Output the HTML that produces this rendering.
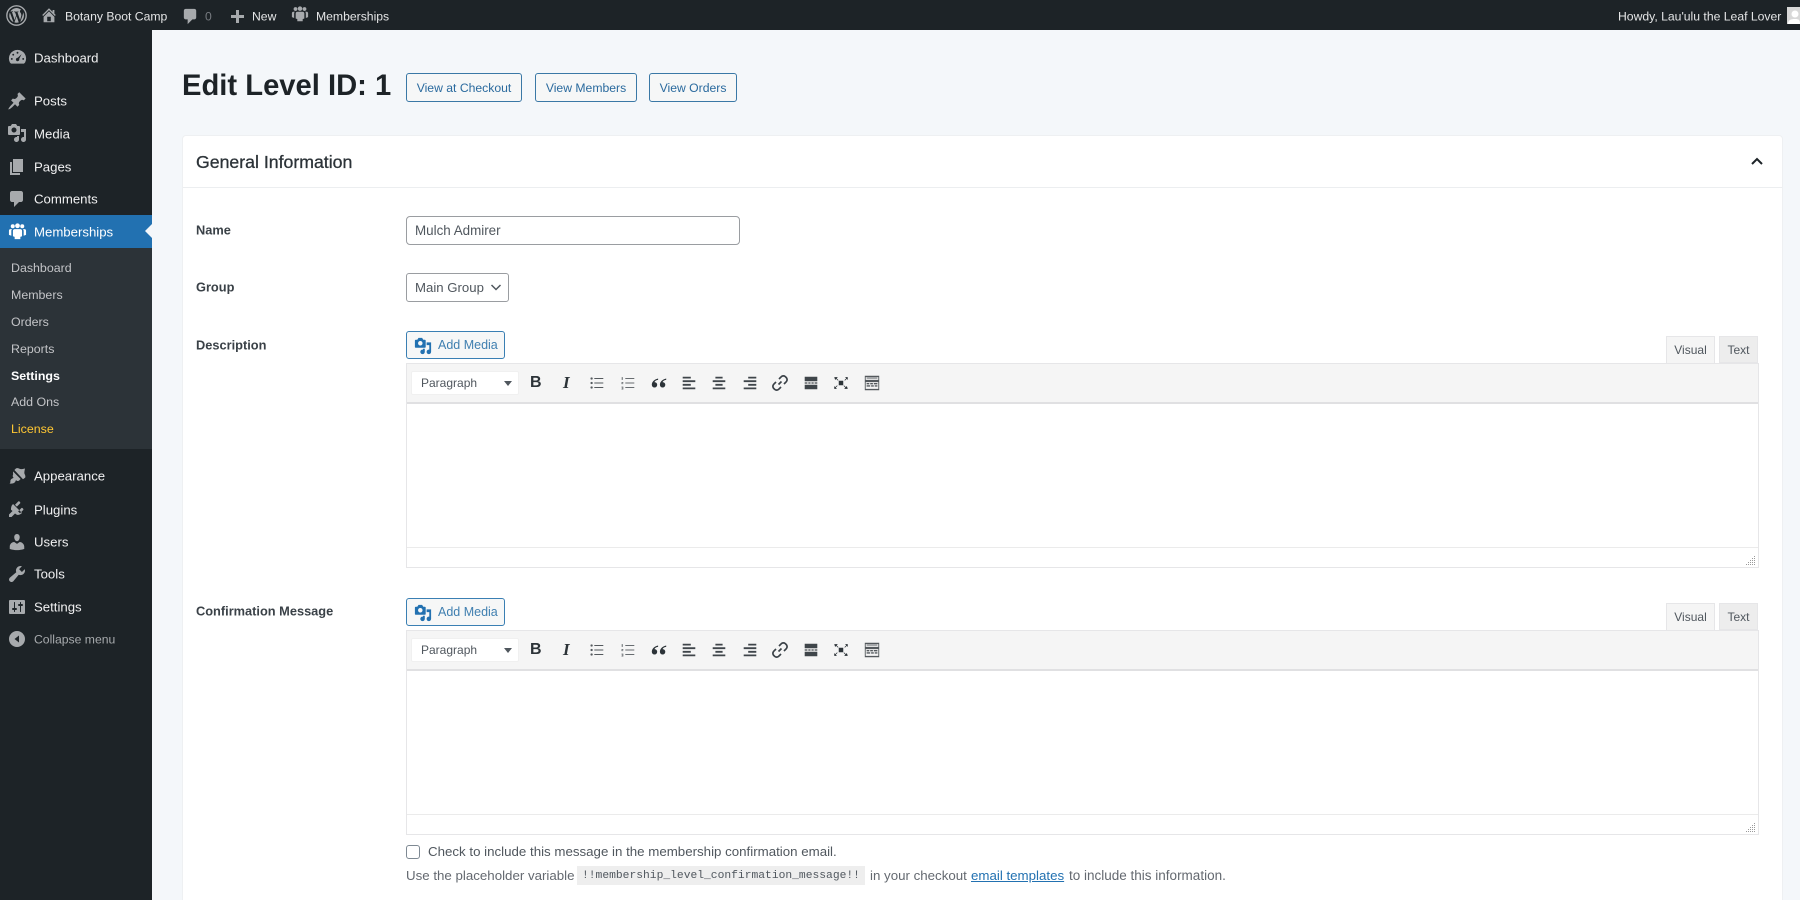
<!DOCTYPE html>
<html lang="en"><head><meta charset="utf-8"><title>Edit Level</title>
<style>
*{box-sizing:border-box}
html,body{margin:0;padding:0;width:1800px;height:900px;overflow:hidden;background:#f4f7fa;font-family:"Liberation Sans",sans-serif;color:#2c3338}
#w{position:absolute;left:0;top:0;width:1800px;height:900px;overflow:hidden;background:#f4f7fa;filter:blur(.35px)}
.a{position:absolute;white-space:nowrap}
.t{position:absolute;white-space:nowrap;line-height:20px;height:20px;transform:translateY(-9px)}
svg{position:absolute;display:block}
.m{left:34px;font-size:13.2px;color:#f0f0f1;transform:translateY(-9.5px)}
.s{left:11px;font-size:12.4px;color:#c3c4c7;transform:translateY(-10px)}
.ab{font-size:12.2px;color:#e4e5e6;transform:translateY(-9.5px)}
.l{left:196px;font-size:12.8px;font-weight:bold;color:#3a4147;transform:translateY(-9.5px)}
.btn{position:absolute;top:73px;height:29px;border:1px solid #3a78a6;border-radius:3px;background:#f6f7f7;color:#2a6a9e;font-size:12.2px;line-height:28px;text-align:center}
.am{position:absolute;left:406px;width:99px;height:28px;border:1px solid #3a7fb3;border-radius:3px;background:#f6f7f7;color:#3f7fb0;font-size:12.5px;line-height:27px;padding-left:31px}
.ed{position:absolute;left:406px;width:1353px;border:1px solid #e6e6e8;background:#fff}
.tb{position:absolute;left:0;right:0;top:0;height:40px;background:#f5f5f5;border-bottom:2px solid #e0e0e2}
.ps{position:absolute;left:411px;width:108px;height:24px;background:#fff;border:1px solid #f0f0f0;border-radius:2px;color:#50575e;font-size:12px;line-height:23px;padding-left:9px}
.ps i{position:absolute;right:6px;top:9px;border-left:4px solid transparent;border-right:4px solid transparent;border-top:5px solid #50575e}
.tv,.tx{position:absolute;height:27px;font-size:12px;text-align:center;line-height:27px;color:#50575e;border:1px solid #e6e6e8}
.tv{left:1666px;width:49px;background:#f5f5f5;border-bottom:0;height:28px}
.tx{left:1719px;width:39px;background:#ededed}
.ic{fill:#a7aaad}
.tbi{fill:#2c3338}
.h{font-size:13.3px;color:#646970}
</style></head><body>
<svg width="0" height="0" style="position:absolute">
<defs>
<symbol id="media" viewBox="0 0 20 20"><path d="M13 11V4c0-.55-.45-1-1-1h-1.670L9 1H5L3.670 3H2c-.55 0-1 .45-1 1v7c0 .55.45 1 1 1h10c.55 0 1-.45 1-1zM7 4.500c1.380 0 2.500 1.120 2.500 2.500S8.380 9.500 7 9.500 4.500 8.380 4.500 7 5.620 4.500 7 4.500zM14 6h5v10.500c0 1.380-1.120 2.500-2.500 2.500S14 17.880 14 16.500s1.120-2.500 2.500-2.500c.17 0 .34.020.5.050V9h-3V6zm-4 8.050V13h2v3.500c0 1.380-1.120 2.500-2.500 2.500S7 17.880 7 16.500 8.120 14 9.500 14c.17 0 .34.020.5.050z"/></symbol>
<symbol id="people" viewBox="0 0 20 20"><circle cx="5" cy="4.500" r="2.100"/><circle cx="15" cy="4.500" r="2.100"/><circle cx="10" cy="4" r="2.500"/><path d="M2.500 7.500c-1 0-1.500.8-1.500 1.700v4.300l2.500 1V9.500c0-.8.3-1.500.8-2zM17.500 7.500c1 0 1.500.8 1.500 1.700v4.300l-2.500 1V9.500c0-.8-.3-1.500-.8-2z"/><path d="M7 7.500h6c1 0 1.800.8 1.800 1.800V15l-1.800.700V18H7v-2.300L5.200 15V9.300C5.200 8.300 6 7.500 7 7.500z"/></symbol>
<symbol id="ul" viewBox="0 0 20 20"><circle cx="4" cy="5" r="1.300"/><circle cx="4" cy="10" r="1.300"/><circle cx="4" cy="15" r="1.300"/><path d="M7 4.500h10v1H7zM7 9.500h10v1H7zM7 14.500h10v1H7z"/></symbol>
<symbol id="ol" viewBox="0 0 20 20"><path d="M3 3.500h1.200v3H3zM2.800 9h2v1h-1v.500h1v.800h-2zM2.800 14h2v3.200h-2v-.700h1.200v-.400h-1v-.700h1v-.400H2.800zM7 4.500h10v1H7zM7 9.500h10v1H7zM7 14.500h10v1H7z"/></symbol>
<symbol id="al" viewBox="0 0 20 20"><path d="M3 3h9v2H3zM3 7h14v2H3zM3 11h9v2H3zM3 15h14v2H3z"/></symbol>
<symbol id="ac" viewBox="0 0 20 20"><path d="M6 3h8v2H6zM3 7h14v2H3zM6 11h8v2H6zM3 15h14v2H3z"/></symbol>
<symbol id="ar" viewBox="0 0 20 20"><path d="M8 3h9v2H8zM3 7h14v2H3zM8 11h9v2H8zM3 15h14v2H3z"/></symbol>
<symbol id="link" viewBox="0 0 20 20"><path d="M8.500 11.500l3-3M9 6l2.200-2.200a3 3 0 0 1 4.300 0l.7.700a3 3 0 0 1 0 4.300L14 11M11 14l-2.200 2.200a3 3 0 0 1-4.300 0l-.7-.7a3 3 0 0 1 0-4.300L6 9" fill="none" stroke="#3a4147" stroke-width="1.700"/></symbol>
<symbol id="more" viewBox="0 0 20 20"><path d="M3 3h14v5H3zM3 12h14v5H3zM3 9.300h3v1.400H3zM7 9.300h2.500v1.400H7zM10.500 9.300H13v1.400h-2.500zM14 9.300h3v1.400h-3z"/></symbol>
<symbol id="fs" viewBox="0 0 20 20"><path d="M7.500 7.500h5v5h-5zM2.500 3.500h4l-1.300 1.300 2 2-.6.600-2-2L3.500 6.700zM17.500 3.500v3.200l-1.100-1.300-2 2-.6-.6 2-2-1.300-1.300zM2.500 16.500v-3.200l1.100 1.300 2-2 .6.6-2 2 1.300 1.300zM17.500 16.500h-4l1.300-1.300-2-2 .6-.6 2 2 1.100-1.300z"/></symbol>
<symbol id="kit" viewBox="0 0 20 20"><path d="M2 2h16v16H2zM3 3.500v3h14v-3zM3 9v7.500h14V9z" fill-rule="evenodd"/><path d="M4 4h12v1H4zM4 10h3v1.500H4zM8 10h3v1.500H8zM12 10h4v1.500h-4zM4 12.500h4V14H4zM9 12.500h3V14H9zM13 12.500h3V14h-3z"/></symbol>
<symbol id="qt" viewBox="0 0 20 20"><path d="M9 5C5 6 2 8.500 2 12a3 3 0 1 0 3-3c.3-1.300 2-2.200 4-2.500zM18 5c-4 1-7 3.500-7 7a3 3 0 1 0 3-3c.3-1.300 2-2.200 4-2.500z"/></symbol>
<symbol id="cmt" viewBox="0 0 20 20"><path d="M5 2h9c1.100 0 2 .9 2 2v7c0 1.100-.9 2-2 2h-2l-5 5v-5H5c-1.100 0-2-.9-2-2V4c0-1.100.9-2 2-2z"/></symbol>
<symbol id="rz" viewBox="0 0 10 10"><path d="M8 1h1v1H8zM6 3h1v1H6zM8 3h1v1H8zM4 5h1v1H4zM6 5h1v1H6zM8 5h1v1H8zM2 7h1v1H2zM4 7h1v1H4zM6 7h1v1H6zM8 7h1v1H8zM0 9h1v1H0zM2 9h1v1H2zM4 9h1v1H4zM6 9h1v1H6zM8 9h1v1H8z"/></symbol>
</defs></svg>
<div id="w">
<!-- admin bar -->
<div class="a" style="left:0;top:0;width:1800px;height:30px;background:#1d2327"></div>
<svg style="left:6px;top:5px" width="21" height="21" viewBox="0 0 20 20"><circle cx="10" cy="10" r="9.200" fill="none" stroke="#a7aaad" stroke-width="1.300"/><path fill="#a7aaad" d="M3.100 10c0 2.800 1.600 5.200 4 6.300L3.700 7.100a7 7 0 0 0-.6 2.900zm11.500-.4c0-.9-.3-1.500-.6-2-.4-.6-.7-1.100-.7-1.700 0-.7.500-1.300 1.200-1.300h.1A6.900 6.900 0 0 0 4.200 6.200h.4c.7 0 1.900-.1 1.900-.1.400 0 .4.500 0 .6l-.8.100 2.500 7.500 1.500-4.500-1.100-2.900-.7-.1c-.4 0-.3-.6 0-.6 0 0 1.200.1 1.900.1s1.900-.1 1.900-.1c.4 0 .4.500 0 .6l-.8.100 2.500 7.400.7-2.300c.3-1 .5-1.700.5-2.300zM10.100 10.600l-2.100 6a6.900 6.900 0 0 0 4.200-.1l-.1-.1zm6-3.900c0 .2.100.5.100.8 0 .7-.1 1.500-.5 2.600l-2.100 6.100a6.900 6.900 0 0 0 2.500-9.500z"/></svg>
<svg class="ic" style="left:40px;top:6px" width="18" height="18" viewBox="0 0 20 20"><path d="M16 8.500l1.530 1.530-1.060 1.060L10 4.620l-6.470 6.470-1.060-1.060L10 2.500l4 4v-2h2v4zm-6-2.460l6 5.990V18H4v-5.970zM12 17v-5H8v5h4z"/></svg>
<span class="t ab" style="left:65px;top:15.500px">Botany Boot Camp</span>
<svg class="ic" style="left:181px;top:7px" width="19" height="19"><use href="#cmt"/></svg>
<span class="t ab" style="left:205px;top:15.500px;color:#777b80">0</span>
<svg class="ic" style="left:227px;top:8px" width="20" height="20" viewBox="0 0 20 20"><path d="M17 7v3h-5v5H9v-5H4V7h5V2h3v5h5z"/></svg>
<span class="t ab" style="left:252px;top:15.500px">New</span>
<svg class="ic" style="left:291px;top:5px" width="18" height="18"><use href="#people"/></svg>
<span class="t ab" style="left:316px;top:15.500px">Memberships</span>
<span class="t ab" style="left:1618px;top:15.500px">Howdy, Lau'ulu the Leaf Lover</span>
<div class="a" style="left:1787px;top:7px;width:13px;height:17px;background:#d8d8d8"><svg style="left:0;top:2px" width="13" height="15" viewBox="0 0 13 15"><circle cx="8" cy="5" r="3.500" fill="#fff"/><path d="M1 15c0-4 3-5 7-5s5 1 5 5z" fill="#fff"/></svg></div>

<!-- sidebar -->
<div class="a" style="left:0;top:30px;width:152px;height:870px;background:#1d2327"></div>
<div class="a" style="left:0;top:215px;width:152px;height:33px;background:#2271b1"></div>
<div class="a" style="left:145px;top:223px;width:0;height:0;border:8px solid transparent;border-left:0;border-right-color:#f4f7fa"></div>
<div class="a" style="left:0;top:248px;width:152px;height:201px;background:#2c3338"></div>

<svg class="ic" style="left:8px;top:48px" width="19" height="19" viewBox="0 0 20 20"><path fill-rule="evenodd" d="M10 2a9 9 0 0 1 8 13.200L16.800 16.500H3.200L2 15.200A9 9 0 0 1 10 2zm0 2a1 1 0 1 0 0 2 1 1 0 0 0 0-2zM5.500 6a1 1 0 1 0 0 2 1 1 0 0 0 0-2zm8.800.500l-4 3.800a1.800 1.800 0 1 0 1.500 1.200zM4 10.500a1 1 0 1 0 0 2 1 1 0 0 0 0-2zm12 0a1 1 0 1 0 0 2 1 1 0 0 0 0-2z"/></svg>
<span class="t m" style="top:58px">Dashboard</span>
<svg class="ic" style="left:7px;top:91px" width="20" height="20" viewBox="0 0 20 20"><path d="M10.440 3.020l1.820-1.820 6.360 6.350-1.830 1.820c-1.050-.68-2.480-.57-3.410.36l-.75.75c-.92.93-1.040 2.350-.35 3.410l-1.830 1.820-2.410-2.410-2.800 2.790c-.42.42-3.380 2.710-3.800 2.290s1.860-3.390 2.280-3.810l2.790-2.790L4.100 9.360l1.830-1.820c1.050.69 2.480.57 3.400-.36l.75-.75c.93-.92 1.050-2.350.36-3.410z"/></svg>
<span class="t m" style="top:101px">Posts</span>
<svg class="ic" style="left:7px;top:123px" width="20" height="20"><use href="#media"/></svg>
<span class="t m" style="top:133.500px">Media</span>
<svg class="ic" style="left:7px;top:157px" width="20" height="20" viewBox="0 0 20 20"><path d="M6 15V2h10v13H6zm-1 1h8v2H3V5h2v11z"/></svg>
<span class="t m" style="top:167px">Pages</span>
<svg class="ic" style="left:7px;top:189px" width="20" height="20"><use href="#cmt"/></svg>
<span class="t m" style="top:199px">Comments</span>
<svg style="left:8px;top:222px;fill:#fff" width="19" height="19"><use href="#people"/></svg>
<span class="t m" style="top:231.500px;color:#fff">Memberships</span>

<span class="t s" style="top:268px">Dashboard</span>
<span class="t s" style="top:294.500px">Members</span>
<span class="t s" style="top:322px">Orders</span>
<span class="t s" style="top:349px">Reports</span>
<span class="t s" style="top:376px;color:#fff;font-weight:bold">Settings</span>
<span class="t s" style="top:402px">Add Ons</span>
<span class="t s" style="top:429px;color:#ffc733">License</span>

<svg class="ic" style="left:7px;top:466px" width="20" height="20" viewBox="0 0 20 20"><path d="M7.400 4l1.500-1.500c.5-.56 2.300-.47 3.600.3 1.200.74 3 .2 5.500-.3-.5 2.500-1 4.500-.3 5.700.8 1.300.9 3.100.3 3.600L16 13.300z"/><path d="M6 5.400l7.600 7.600-1.600 1.600c-1 .8-2.200.3-3-.5-.4.7-.5 1.300-1 2-1 1.300-3 1.800-5.500 1.400.7-.6 1-1.200.9-2.300-.1-1 .4-2 1.400-2.500.6-.4 1.200-.5 1.800-1-.8-.8-1.300-2-.5-3z"/></svg>
<span class="t m" style="top:476px">Appearance</span>
<svg class="ic" style="left:7px;top:499px" width="20" height="20" viewBox="0 0 20 20"><path d="M13.110 4.360L9.870 7.600 8 5.730l3.240-3.240c.35-.34 1.050-.2 1.560.32.52.51.66 1.210.31 1.550zm-8 1.770l.91-1.120 9.010 9.010-1.190.84c-.71.71-2.630 1.160-3.820 1L8 14.500 4.500 18H2v-2.500L5.500 12 4 10.700c-.16-1.190.4-3.860 1.110-4.570zm9.240 3l-3.240 3.240 1.870 1.870 3.240-3.240c.34-.35.2-1.050-.32-1.560-.51-.52-1.210-.66-1.550-.31z"/></svg>
<span class="t m" style="top:509.500px">Plugins</span>
<svg class="ic" style="left:7px;top:532px" width="20" height="20" viewBox="0 0 20 20"><path d="M10 9.250c-2.270 0-2.730-3.440-2.730-3.440C7 4.020 7.820 2 9.970 2c2.160 0 2.980 2.020 2.710 3.810 0 0-.41 3.440-2.680 3.440zm0 2.570L12.720 10c2.390 0 4.520 2.330 4.520 4.530v2.490s-3.650 1.130-7.240 1.130c-3.650 0-7.240-1.130-7.240-1.130v-2.490c0-2.250 1.940-4.480 4.470-4.480z"/></svg>
<span class="t m" style="top:542px">Users</span>
<svg class="ic" style="left:7px;top:564px" width="20" height="20" viewBox="0 0 20 20"><path d="M16.680 9.770c-1.340 1.340-3.300 1.670-4.950.99l-5.410 6.520c-.99.99-2.590.99-3.570 0s-.99-2.580 0-3.570l6.520-5.420c-.68-1.650-.35-3.610.99-4.950 1.280-1.280 3.120-1.620 4.720-1.060l-2.890 2.890 2.820 2.820 2.860-2.870c.53 1.580.18 3.390-1.090 4.650z"/></svg>
<span class="t m" style="top:574px">Tools</span>
<svg class="ic" style="left:7px;top:597px" width="20" height="20" viewBox="0 0 20 20"><path d="M18 16V4c0-.55-.45-1-1-1H3c-.55 0-1 .45-1 1v12c0 .55.45 1 1 1h14c.55 0 1-.45 1-1zM8 11h1c.55 0 1 .45 1 1s-.45 1-1 1H8v1.500c0 .28-.22.5-.5.5s-.5-.22-.5-.5V13H6c-.55 0-1-.45-1-1s.45-1 1-1h1V5.500c0-.28.22-.5.5-.5s.5.22.5.5V11zm5-2h-1c-.55 0-1-.45-1-1s.45-1 1-1h1V5.500c0-.28.22-.5.5-.5s.5.22.5.5V7h1c.55 0 1 .45 1 1s-.45 1-1 1h-1v5.500c0 .28-.22.5-.5.5s-.5-.22-.5-.5V9z"/></svg>
<span class="t m" style="top:607px">Settings</span>
<svg class="ic" style="left:7px;top:629px" width="20" height="20" viewBox="0 0 20 20"><path fill-rule="evenodd" d="M10 2a8 8 0 1 1 0 16 8 8 0 0 1 0-16zm2 4.500L7.500 10l4.500 3.500z"/></svg>
<span class="t m" style="top:639px;color:#a7aaad;font-size:12.200px">Collapse menu</span>

<!-- heading -->
<div class="t" style="left:182px;top:85px;font-size:29.200px;font-weight:bold;color:#1d2327;height:36px;line-height:36px;transform:translateY(-17px)">Edit Level ID: 1</div>
<div class="btn" style="left:406px;width:116px">View at Checkout</div>
<div class="btn" style="left:535px;width:102px">View Members</div>
<div class="btn" style="left:649px;width:88px">View Orders</div>

<!-- card -->
<div class="a" style="left:182px;top:135px;width:1601px;height:775px;background:#fff;border:1px solid #eef0f2;border-radius:4px"></div>
<div class="a" style="left:183px;top:187px;width:1599px;height:1px;background:#eceef0"></div>
<div class="t" style="left:196px;top:161px;font-size:17.700px;color:#2c3338;-webkit-text-stroke:.3px #2c3338">General Information</div>
<svg style="left:1750px;top:155px" width="14" height="12" viewBox="0 0 14 12"><path d="M2 9l5-5 5 5" fill="none" stroke="#1d2327" stroke-width="2"/></svg>

<span class="t l" style="top:230px">Name</span>
<div class="a" style="left:406px;top:216px;width:334px;height:29px;border:1px solid #9a9da1;border-radius:4px;background:#fff;color:#50575e;font-size:13.400px;line-height:27px;padding-left:8px">Mulch Admirer</div>
<span class="t l" style="top:287px">Group</span>
<div class="a" style="left:406px;top:273px;width:103px;height:29px;border:1px solid #9a9da1;border-radius:3px;background:#fff;color:#50575e;font-size:13.200px;line-height:27px;padding-left:8px">Main Group<svg style="right:6px;top:9px" width="12" height="9" viewBox="0 0 12 9"><path d="M1.500 2l4.500 4.500L10.500 2" fill="none" stroke="#50575e" stroke-width="1.500"/></svg></div>
<span class="t l" style="top:345px">Description</span>
<span class="t l" style="top:611px">Confirmation Message</span>

<!-- editor 1 -->
<div class="am" style="top:331px">Add Media<svg style="left:7px;top:5px;fill:#2271b1" width="18" height="18"><use href="#media"/></svg></div>
<div class="tv" style="top:336px">Visual</div><div class="tx" style="top:336px">Text</div>
<div class="ed" style="top:363px;height:205px"><div class="tb"></div><div class="a" style="left:0;right:0;top:183px;height:1px;background:#ebebeb"></div>
<svg style="right:2px;bottom:2px;fill:#9a9a9a" width="10" height="10"><use href="#rz"/></svg></div>
<div class="ps" style="top:371px">Paragraph<i></i></div>
<span class="t" style="left:530px;top:383px;font-size:16px;font-weight:bold;color:#2c3338;transform:translateY(-10px)">B</span>
<span class="t" style="left:563px;top:383px;font-size:17px;font-style:italic;font-weight:bold;font-family:'Liberation Serif',serif;color:#2c3338;transform:translateY(-10px)">I</span>
<svg class="tbi" style="left:588px;top:374px;opacity:.8" width="18" height="18"><use href="#ul"/></svg>
<svg class="tbi" style="left:619px;top:374px;opacity:.7" width="18" height="18"><use href="#ol"/></svg>
<svg class="tbi" style="left:650px;top:374px" width="18" height="18"><use href="#qt"/></svg>
<svg class="tbi" style="left:680px;top:374px;opacity:.9" width="18" height="18"><use href="#al"/></svg>
<svg class="tbi" style="left:710px;top:374px;opacity:.9" width="18" height="18"><use href="#ac"/></svg>
<svg class="tbi" style="left:741px;top:374px;opacity:.9" width="18" height="18"><use href="#ar"/></svg>
<svg style="left:770px;top:373px" width="20" height="20"><use href="#link"/></svg>
<svg class="tbi" style="left:802px;top:374px;opacity:.9" width="18" height="18"><use href="#more"/></svg>
<svg class="tbi" style="left:832px;top:374px" width="18" height="18"><use href="#fs"/></svg>
<svg class="tbi" style="left:863px;top:374px;opacity:.8" width="18" height="18"><use href="#kit"/></svg>

<!-- editor 2 -->
<div class="am" style="top:598px">Add Media<svg style="left:7px;top:5px;fill:#2271b1" width="18" height="18"><use href="#media"/></svg></div>
<div class="tv" style="top:603px">Visual</div><div class="tx" style="top:603px">Text</div>
<div class="ed" style="top:630px;height:205px"><div class="tb"></div><div class="a" style="left:0;right:0;top:183px;height:1px;background:#ebebeb"></div>
<svg style="right:2px;bottom:2px;fill:#9a9a9a" width="10" height="10"><use href="#rz"/></svg></div>
<div class="ps" style="top:638px">Paragraph<i></i></div>
<span class="t" style="left:530px;top:650px;font-size:16px;font-weight:bold;color:#2c3338;transform:translateY(-10px)">B</span>
<span class="t" style="left:563px;top:650px;font-size:17px;font-style:italic;font-weight:bold;font-family:'Liberation Serif',serif;color:#2c3338;transform:translateY(-10px)">I</span>
<svg class="tbi" style="left:588px;top:641px;opacity:.8" width="18" height="18"><use href="#ul"/></svg>
<svg class="tbi" style="left:619px;top:641px;opacity:.7" width="18" height="18"><use href="#ol"/></svg>
<svg class="tbi" style="left:650px;top:641px" width="18" height="18"><use href="#qt"/></svg>
<svg class="tbi" style="left:680px;top:641px;opacity:.9" width="18" height="18"><use href="#al"/></svg>
<svg class="tbi" style="left:710px;top:641px;opacity:.9" width="18" height="18"><use href="#ac"/></svg>
<svg class="tbi" style="left:741px;top:641px;opacity:.9" width="18" height="18"><use href="#ar"/></svg>
<svg style="left:770px;top:640px" width="20" height="20"><use href="#link"/></svg>
<svg class="tbi" style="left:802px;top:641px;opacity:.9" width="18" height="18"><use href="#more"/></svg>
<svg class="tbi" style="left:832px;top:641px" width="18" height="18"><use href="#fs"/></svg>
<svg class="tbi" style="left:863px;top:641px;opacity:.8" width="18" height="18"><use href="#kit"/></svg>

<!-- footer of form -->
<div class="a" style="left:406px;top:845px;width:14px;height:14px;border:1px solid #7e8993;border-radius:3px;background:#fff"></div>
<span class="t" style="left:428px;top:852px;font-size:13.300px;color:#50575e;transform:translateY(-10px)">Check to include this message in the membership confirmation email.</span>
<span class="t h" style="left:406px;top:876px;transform:translateY(-10px)">Use the placeholder variable</span>
<div class="a" style="left:577px;top:866px;width:288px;height:19px;background:#eeeeee"></div>
<span class="t" style="left:582px;top:876px;font-family:'Liberation Mono',monospace;font-size:11.300px;color:#50575e;transform:translateY(-10px)">!!membership_level_confirmation_message!!</span>
<span class="t h" style="left:870px;top:876px;transform:translateY(-10px)">in your checkout</span>
<span class="t h" style="left:971px;top:876px;color:#2271b1;text-decoration:underline;transform:translateY(-10px)">email templates</span>
<span class="t h" style="left:1069px;top:876px;font-size:13.500px;transform:translateY(-10px)">to include this information.</span>
</div>
</body></html>
